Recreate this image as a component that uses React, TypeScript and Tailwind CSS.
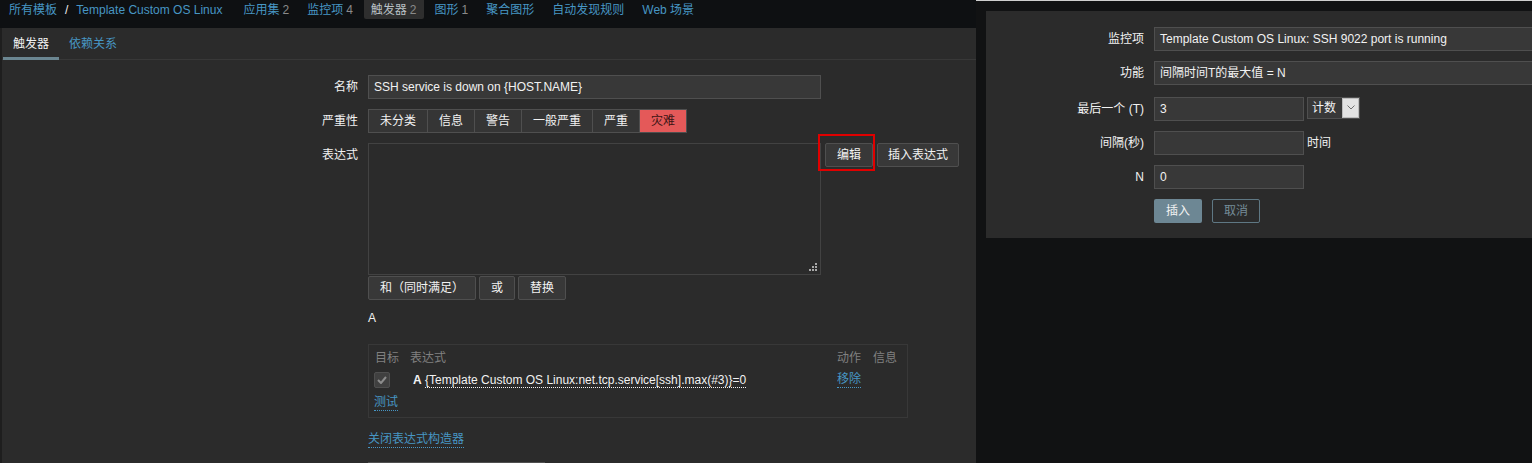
import React from "react";

const navItems = [
  { label: "应用集", count: "2" },
  { label: "监控项", count: "4" },
  { label: "触发器", count: "2", selected: true },
  { label: "图形", count: "1" },
  { label: "聚合图形" },
  { label: "自动发现规则" },
  { label: "Web 场景" },
];

const severities = ["未分类", "信息", "警告", "一般严重", "严重", "灾难"];

function Btn({ children, className = "" }: { children: React.ReactNode; className?: string }) {
  return (
    <span className={`flex h-[24px] items-center rounded-[2px] border border-[#4f4f4f] bg-[#383838] px-[10px] leading-[22px] text-[#f2f2f2] ${className}`}>
      {children}
    </span>
  );
}

function Field({ children, className = "" }: { children?: React.ReactNode; className?: string }) {
  return (
    <div className={`h-[24px] shrink-0 overflow-hidden whitespace-nowrap border border-[#4f4f4f] bg-[#383838] px-[5px] leading-[22px] text-[#f2f2f2] ${className}`}>
      {children}
    </div>
  );
}

function Row({ label, children, className = "" }: { label: string; children: React.ReactNode; className?: string }) {
  return (
    <div className={`flex gap-[10px] ${className}`}>
      <div className="w-[356px] shrink-0 text-right leading-[24px]">{label}</div>
      {children}
    </div>
  );
}

function PanelRow({ label, children, className = "" }: { label: string; children: React.ReactNode; className?: string }) {
  return (
    <div className={`flex items-center gap-[10px] ${className}`}>
      <div className="w-[158px] shrink-0 text-right leading-[24px]">{label}</div>
      {children}
    </div>
  );
}

export default function App() {
  return (
    <div className="flex h-[463px] w-[1532px] overflow-hidden font-['Liberation_Sans','Noto_Sans_CJK_SC',sans-serif] text-[12px] text-[#f2f2f2]">
      {/* left: trigger form */}
      <div className="flex w-[976px] shrink-0 flex-col bg-[#2b2b2b]">
        <nav className="flex h-[28px] shrink-0 items-start bg-[#0e1012] pl-[9px]">
          <div className="flex h-[19px] items-center">
            <span className="text-[#4796c4]">所有模板</span>
            <span className="mx-[8px]">/</span>
            <span className="text-[#4796c4]">Template Custom OS Linux</span>
          </div>
          <div className="ml-[14px] flex gap-[4px]">
            {navItems.map((n) => (
              <span
                key={n.label}
                className={`flex h-[19px] items-center rounded-b-[2px] px-[7px] ${n.selected ? "bg-[#2e2e2e] text-[#b9c0c4]" : "text-[#4796c4]"}`}
              >
                {n.label}
                {n.count && <span className="ml-[3px] text-[#8a8a8a]">{n.count}</span>}
              </span>
            ))}
          </div>
        </nav>

        <div className="flex flex-1">
          <div className="w-[2px] shrink-0 bg-[#1e1e1e]" />
          <div className="flex-1">
            <div className="flex h-[32px] border-b border-[#383838] pl-[1px]">
              <span className="relative flex items-center px-[10px] text-[#f2f2f2]">
                触发器
                <span className="absolute bottom-[-1px] left-0 h-[3px] w-full bg-[#6b8691]" />
              </span>
              <span className="flex items-center px-[10px] text-[#4796c4]">依赖关系</span>
            </div>

            <Row label="名称" className="mt-[15px]">
              <Field className="w-[453px]">SSH service is down on {"{HOST.NAME}"}</Field>
            </Row>

            <Row label="严重性" className="mt-[10px]">
              <div className="flex h-[24px] border-l border-[#4f4f4f]">
                {severities.map((s) => (
                  <span
                    key={s}
                    className={`flex items-center border-y border-r border-[#4f4f4f] px-[11px] ${s === "灾难" ? "bg-[#e45959] text-[#3a1414]" : "bg-[#353535]"}`}
                  >
                    {s}
                  </span>
                ))}
              </div>
            </Row>

            <Row label="表达式" className="mt-[10px]">
              <div>
                <div className="flex items-start">
                  <div className="relative h-[132px] w-[453px] border border-[#424242] bg-[#2b2b2b]">
                    <svg className="absolute bottom-[2px] right-[2px]" width="9" height="9" viewBox="0 0 9 9" fill="#a8a8a8">
                      <rect x="6" y="0" width="2" height="2" />
                      <rect x="3" y="3" width="2" height="2" />
                      <rect x="6" y="3" width="2" height="2" />
                      <rect x="0" y="6" width="2" height="2" />
                      <rect x="3" y="6" width="2" height="2" />
                      <rect x="6" y="6" width="2" height="2" />
                    </svg>
                  </div>
                  <div className="ml-[4px] flex gap-[4px]">
                    <span className="relative">
                      <Btn className="px-[11px]">编辑</Btn>
                      <span className="absolute left-[-7px] top-[-9px] h-[37px] w-[57px] border-2 border-[#e00000]" />
                    </span>
                    <Btn>插入表达式</Btn>
                  </div>
                </div>

                <div className="mt-[1px] flex gap-[3px]">
                  <Btn className="px-[11px]">和（同时满足）</Btn>
                  <Btn className="px-[11px]">或</Btn>
                  <Btn className="px-[11px]">替换</Btn>
                </div>

                <div className="mt-[11px] leading-[14px]">A</div>

                <div className="mt-[19px] w-[540px] border border-[#383838] pb-[6px] pl-[5px] pr-[10px] pt-[6px]">
                  <div className="flex leading-[14px] text-[#808080]">
                    <span className="w-[36px] pl-[1px]">目标</span>
                    <span className="w-[427px]">表达式</span>
                    <span className="w-[36px]">动作</span>
                    <span>信息</span>
                  </div>
                  <div className="mt-[7px] flex h-[16px] items-center">
                    <span className="w-[36px]">
                      <span className="flex h-[16px] w-[16px] items-center justify-center rounded-[2px] border border-[#4f4f4f] bg-[#404040]">
                        <svg width="10" height="8" viewBox="0 0 10 8" fill="none" stroke="#8c8c8c" strokeWidth="2">
                          <path d="M1 4l3 3 5-6" />
                        </svg>
                      </span>
                    </span>
                    <span className="w-[427px] whitespace-nowrap pl-[3px]">
                      <b>A</b>{" "}
                      <span className="border-b border-dotted border-[#f2f2f2]">
                        {"{Template Custom OS Linux:net.tcp.service[ssh].max(#3)}=0"}
                      </span>
                    </span>
                    <span className="border-b border-dotted border-[#4796c4] leading-[15px] text-[#4796c4]">移除</span>
                  </div>
                  <div className="mt-[7px] flex">
                    <span className="border-b border-dotted border-[#4796c4] leading-[15px] text-[#4796c4]">测试</span>
                  </div>
                </div>

                <div className="mt-[14px] flex">
                  <span className="border-b border-dotted border-[#4796c4] leading-[15px] text-[#4796c4]">关闭表达式构造器</span>
                </div>

                <div className="mt-[14px] h-[24px] w-[177px] border border-[#4f4f4f] bg-[#383838]" />
              </div>
            </Row>
          </div>
        </div>
      </div>

      {/* right: function dialog */}
      <div className="flex flex-1 flex-col border-t border-[#cfcfcf] bg-[#111213]">
        <div className="ml-[10px] mt-[10px] h-[227px] overflow-hidden bg-[#2b2b2b] pt-[16px]">
          <PanelRow label="监控项">
            <Field className="w-[453px]">Template Custom OS Linux: SSH 9022 port is running</Field>
          </PanelRow>
          <PanelRow label="功能" className="mt-[10px]">
            <Field className="w-[453px]">间隔时间T的最大值 = N</Field>
          </PanelRow>
          <PanelRow label="最后一个 (T)" className="mt-[12px]">
            <div className="flex items-center">
              <Field className="w-[150px]">3</Field>
              <div className="ml-[3px] mt-[-3px] flex h-[22px] w-[53px] border border-[#4f4f4f] bg-[#383838]">
                <span className="flex-1 pl-[4px] leading-[20px]">计数</span>
                <span className="flex w-[17px] items-center justify-center border border-[#bdbdbd] bg-[#e3e3e3]">
                  <svg width="8" height="5" viewBox="0 0 8 5" fill="none" stroke="#6f6f6f" strokeWidth="1">
                    <path d="M0.5 0.5l3.5 3.5 3.5-3.5" />
                  </svg>
                </span>
              </div>
            </div>
          </PanelRow>
          <PanelRow label="间隔(秒)" className="mt-[10px]">
            <div className="flex items-center">
              <Field className="w-[150px]" />
              <span className="ml-[3px]">时间</span>
            </div>
          </PanelRow>
          <PanelRow label="N" className="mt-[10px]">
            <Field className="w-[150px]">0</Field>
          </PanelRow>
          <PanelRow label="" className="mt-[10px]">
            <div className="flex gap-[10px]">
              <span className="flex h-[24px] w-[48px] items-center justify-center rounded-[2px] bg-[#6d8794] text-[#f2f2f2]">插入</span>
              <span className="flex h-[24px] w-[48px] items-center justify-center rounded-[2px] border border-[#5f7884] text-[#768d99]">取消</span>
            </div>
          </PanelRow>
        </div>
      </div>
    </div>
  );
}
